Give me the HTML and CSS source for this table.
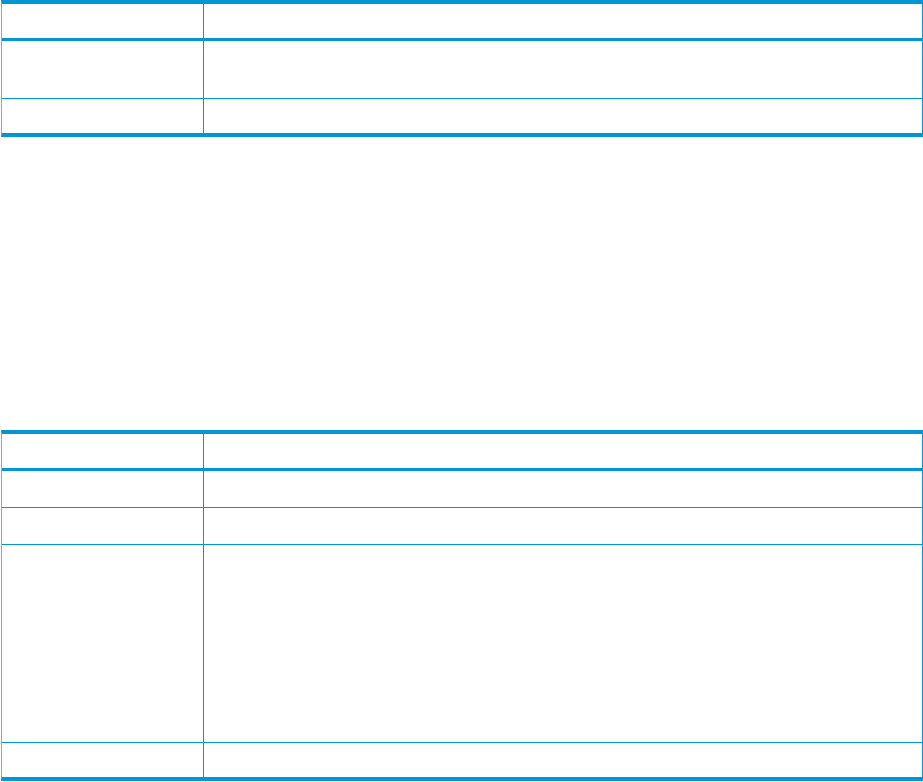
FILE: index.html
```html
<!DOCTYPE html>
<html lang="en">
<head>
    <meta charset="UTF-8">
    <title>Tables</title>
    <link rel="stylesheet" href="styles.css">
</head>
<body>
    <table class="grid">
        <colgroup>
            <col class="col-key">
            <col>
        </colgroup>
        <thead>
            <tr class="head"><th></th><th></th></tr>
        </thead>
        <tbody>
            <tr class="r57"><td></td><td></td></tr>
            <tr class="r34 last"><td></td><td></td></tr>
        </tbody>
    </table>

    <table class="grid second">
        <colgroup>
            <col class="col-key">
            <col>
        </colgroup>
        <thead>
            <tr class="head"><th></th><th></th></tr>
        </thead>
        <tbody>
            <tr class="r36"><td></td><td></td></tr>
            <tr class="r36"><td></td><td></td></tr>
            <tr class="r197"><td></td><td></td></tr>
            <tr class="r34 last"><td></td><td></td></tr>
        </tbody>
    </table>
</body>
</html>
```

FILE: styles.css
```css
:root {
    --blue: #0096d6;
}

* {
    box-sizing: border-box;
    margin: 0;
    padding: 0;
}

body {
    font-family: 'Liberation Sans', Arial, sans-serif;
    background: white;
}

.grid {
    width: 922px;
    margin-left: 1px;
    table-layout: fixed;
    border-collapse: separate;
    border-spacing: 0;
    border-top: 4px solid var(--blue);
    border-bottom: 4px solid var(--blue);
    border-left: 1px solid #5bb8e6;
    border-right: 1px solid var(--blue);
}

.grid.second {
    margin-top: 293px;
}

.col-key {
    width: 201px;
}

th, td {
    padding: 0;
    border-bottom: 1px solid var(--blue);
}

th + th, td + td {
    border-left: 1px solid var(--blue);
}

.head th {
    height: 37px;
    border-bottom-width: 3px;
}

.r57 td { height: 58px; }
.r36 td { height: 37px; }
.r197 td { height: 198px; }
.r34 td { height: 34px; }

.last td {
    border-bottom: none;
}
```
